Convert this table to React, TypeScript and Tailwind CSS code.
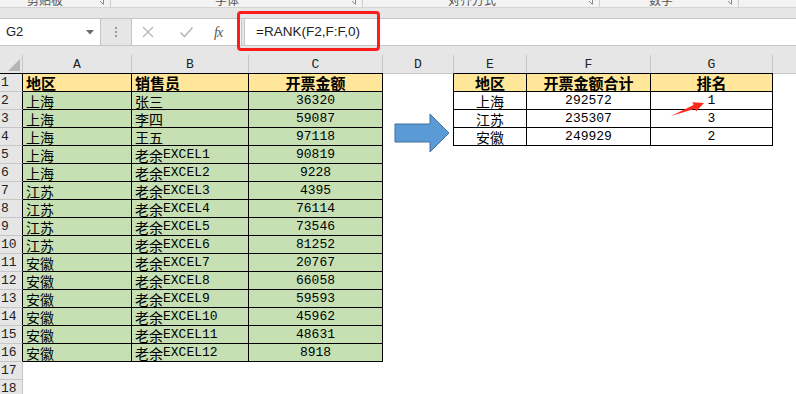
import React from "react";

const CJK = "font-['Noto_Sans_CJK_SC',sans-serif]";
const MONO = "font-['Liberation_Mono','Noto_Sans_CJK_SC',monospace]";

function Txt({ t, bold }: { t: string; bold?: boolean }) {
  const parts = t.match(/[\u4e00-\u9fff]+|[^\u4e00-\u9fff]+/g) || [];
  return (
    <>
      {parts.map((p, i) =>
        /[\u4e00-\u9fff]/.test(p) ? (
          <span key={i} className={bold ? CJK + " text-[15px] leading-[16px] font-bold" : CJK + " text-[14px] leading-[16px]"}>
            {p}
          </span>
        ) : (
          <span key={i} className={bold ? MONO + " text-[13px] leading-[16px] font-bold" : MONO + " text-[13px] leading-[16px]"}>
            {p}
          </span>
        )
      )}
    </>
  );
}

const data: [string, string, string][] = [
  ["地区", "销售员", "开票金额"],
  ["上海", "张三", "36320"],
  ["上海", "李四", "59087"],
  ["上海", "王五", "97118"],
  ["上海", "老余EXCEL1", "90819"],
  ["上海", "老余EXCEL2", "9228"],
  ["江苏", "老余EXCEL3", "4395"],
  ["江苏", "老余EXCEL4", "76114"],
  ["江苏", "老余EXCEL5", "73546"],
  ["江苏", "老余EXCEL6", "81252"],
  ["安徽", "老余EXCEL7", "20767"],
  ["安徽", "老余EXCEL8", "66058"],
  ["安徽", "老余EXCEL9", "59593"],
  ["安徽", "老余EXCEL10", "45962"],
  ["安徽", "老余EXCEL11", "48631"],
  ["安徽", "老余EXCEL12", "8918"],
];

const summary: [string, string, string][] = [
  ["地区", "开票金额合计", "排名"],
  ["上海", "292572", "1"],
  ["江苏", "235307", "3"],
  ["安徽", "249929", "2"],
];

function Launcher() {
  return (
    <svg width="6" height="6" viewBox="0 0 6 6" className="shrink-0">
      <path d="M0.5 0.5H5.5V5.5" fill="none" stroke="#8a8a8a" strokeWidth="1" />
      <path d="M2 2L5 5" stroke="#8a8a8a" strokeWidth="1" />
    </svg>
  );
}

function RibbonGroup({ label, w, pl, lw }: { label: string; w: string; pl: string; lw: string }) {
  return (
    <div className={"flex h-full shrink-0 border-r border-[#d0d0d0] " + w}>
      <div className={"overflow-hidden " + pl + " " + lw}>
        <div className={CJK + " text-[12px] leading-[14px] text-[#555] mt-[-7px] whitespace-nowrap"}>{label}</div>
      </div>
      <div className="flex-1" />
      <div className="pr-[6px] mt-[-1px]">
        <Launcher />
      </div>
    </div>
  );
}

export default function App() {
  const rows = Array.from({ length: 18 }, (_, i) => i + 1);
  return (
    <div className="relative w-[796px] h-[394px] overflow-hidden bg-white flex flex-col">
      {/* ribbon bottom edge */}
      <div className="flex h-[8px] shrink-0 bg-[#f3f3f3] border-b border-[#d4d4d4]">
        <RibbonGroup label="剪贴板" w="w-[111px]" pl="pl-[27px]" lw="w-[70px]" />
        <RibbonGroup label="字体" w="w-[252px]" pl="pl-[104px]" lw="w-[140px]" />
        <RibbonGroup label="对齐方式" w="w-[237px]" pl="pl-[85px]" lw="w-[140px]" />
        <RibbonGroup label="数字" w="w-[139px]" pl="pl-[49px]" lw="w-[80px]" />
        <div className="flex-1" />
      </div>
      {/* strip */}
      <div className="h-[11px] shrink-0 bg-[#e6e6e6] border-b border-[#c6c6c6]" />
      {/* formula bar */}
      <div className="flex h-[27px] shrink-0 bg-[#e6e6e6] border-b border-[#c6c6c6]">
        <div className="w-[101px] shrink-0 bg-white border-r border-[#c6c6c6] flex items-center pl-[6px] pr-[6px]">
          <span className="font-['Liberation_Sans',sans-serif] text-[13px] text-[#222]">G2</span>
          <div className="flex-1" />
          <svg width="8" height="5" viewBox="0 0 8 5">
            <path d="M0 0H8L4 4.5Z" fill="#6a6a6a" />
          </svg>
        </div>
        <div className="w-[30px] shrink-0 flex flex-col items-center justify-center gap-[2px]">
          <div className="w-[2px] h-[2px] bg-[#9a9a9a]" />
          <div className="w-[2px] h-[2px] bg-[#9a9a9a]" />
          <div className="w-[2px] h-[2px] bg-[#9a9a9a]" />
        </div>
        <div className="w-[111px] shrink-0 bg-white border-l border-r border-[#c6c6c6] flex items-center">
          <svg width="14" height="14" viewBox="0 0 14 14" className="ml-[9px]">
            <path d="M2 2L12 12M12 2L2 12" stroke="#b8b8b8" strokeWidth="1.4" />
          </svg>
          <svg width="15" height="14" viewBox="0 0 15 14" className="ml-[24px]">
            <path d="M1.5 7.5L5.5 11.5L13.5 2.5" fill="none" stroke="#b8b8b8" strokeWidth="1.6" />
          </svg>
          <span className="ml-[20px] font-['Liberation_Serif',serif] italic text-[14px] text-[#555] tracking-[-1px]">fx</span>
        </div>
        <div className="w-[2px] shrink-0" />
        <div className="flex-1 bg-white border-l border-[#c6c6c6] flex items-center pl-[11px]">
          <span className="font-['Liberation_Sans',sans-serif] text-[13.5px] text-[#222]">=RANK(F2,F:F,0)</span>
        </div>
      </div>
      {/* gap */}
      <div className="h-[9px] shrink-0 bg-[#e6e6e6]" />
      {/* column header */}
      <div className="flex h-[18px] shrink-0 bg-[#e6e6e6]">
        <div className="w-[23px] shrink-0 border-r border-[#c6c6c6] flex items-end justify-end pr-[2px] pb-[2px]">
          <svg width="12" height="12" viewBox="0 0 12 12">
            <path d="M12 0V12H0Z" fill="#b4b4b4" />
          </svg>
        </div>
        {[
          ["A", "w-[109px]"],
          ["B", "w-[117px]"],
          ["C", "w-[134px]"],
          ["D", "w-[71px]"],
          ["E", "w-[73px]"],
          ["F", "w-[124px]"],
          ["G", "w-[122px]"],
        ].map(([l, w]) => (
          <div key={l} className={"shrink-0 border-r border-[#c6c6c6] flex items-center justify-center " + w}>
            <span className={MONO + " text-[13px] text-[#222] leading-none"}>{l}</span>
          </div>
        ))}
        <div className="flex-1" />
      </div>
      {/* rows */}
      {rows.map((r) => {
        const inMain = r <= 16;
        const inSum = r <= 4;
        const first = r === 1;
        const h = first ? "h-[19px]" : "h-[18px]";
        const d = inMain ? data[r - 1] : null;
        const s = inSum ? summary[r - 1] : null;
        const mainBg = first ? "bg-[#ffe699]" : "bg-[#c6e0b4]";
        const sumBg = first ? "bg-[#ffe699]" : "bg-white";
        const topB = first ? "border-t " : "";
        return (
          <div key={r} className={"flex shrink-0 " + h}>
            <div
              className={
                "w-[23px] shrink-0 bg-[#e6e6e6] border-b border-r border-[#c6c6c6] flex items-center pl-[1px] " +
                (first ? "border-t border-t-black " : "") +
                (inMain ? "border-r-black" : "")
              }
            >
              <span className={MONO + " text-[13px] text-[#222] leading-none"}>{r}</span>
            </div>
            {d ? (
              <>
                <div className={"w-[109px] shrink-0 border-r border-b border-black flex items-center pl-[3px] leading-[16px] overflow-hidden " + topB + mainBg}>
                  <Txt t={d[0]} bold={first} />
                </div>
                <div className={"w-[117px] shrink-0 border-r border-b border-black flex items-center pl-[3px] leading-[16px] overflow-hidden " + topB + mainBg}>
                  <Txt t={d[1]} bold={first} />
                </div>
                <div className={"w-[134px] shrink-0 border-r border-b border-black flex items-center justify-center leading-[16px] overflow-hidden " + topB + mainBg}>
                  <Txt t={d[2]} bold={first} />
                </div>
              </>
            ) : (
              <div className="w-[360px] shrink-0" />
            )}
            <div
              className={
                "w-[71px] shrink-0 " +
                (first ? "border-t border-t-[#c6c6c6] " : "") +
                (inSum ? "border-r border-r-black" : "")
              }
            />
            {s ? (
              <>
                <div className={"w-[73px] shrink-0 border-r border-b border-black flex items-center justify-center leading-[16px] overflow-hidden " + topB + sumBg}>
                  <Txt t={s[0]} bold={first} />
                </div>
                <div className={"w-[124px] shrink-0 border-r border-b border-black flex items-center justify-center leading-[16px] overflow-hidden " + topB + sumBg}>
                  <Txt t={s[1]} bold={first} />
                </div>
                <div className={"w-[122px] shrink-0 border-r border-b border-black flex items-center justify-center leading-[16px] overflow-hidden " + topB + sumBg}>
                  <Txt t={s[2]} bold={first} />
                </div>
              </>
            ) : (
              <div className="w-[319px] shrink-0" />
            )}
            <div className={"flex-1 " + (first ? "border-t border-t-[#c6c6c6]" : "")} />
          </div>
        );
      })}

      {/* red highlight box around formula */}
      <div className="absolute left-[237px] top-[11px] w-[143px] h-[40px] border-[3px] border-[#ff1c1c] rounded-[4px]" />

      {/* blue arrow */}
      <svg className="absolute left-[394px] top-[113px]" width="57" height="41" viewBox="0 0 57 41">
        <path d="M1 11H36V1L55 20L36 39V29H1Z" fill="#5b9bd5" stroke="#41719c" strokeWidth="1" />
      </svg>

      {/* red pointer arrow */}
      <svg className="absolute left-[665px] top-[98px]" width="45" height="24" viewBox="0 0 45 24">
        <path
          d="M6 18L29.98 10.71L31.08 13.5L39 5L27.42 4.2L28.52 6.99Z"
          fill="#ff2a1a"
        />
      </svg>
    </div>
  );
}
